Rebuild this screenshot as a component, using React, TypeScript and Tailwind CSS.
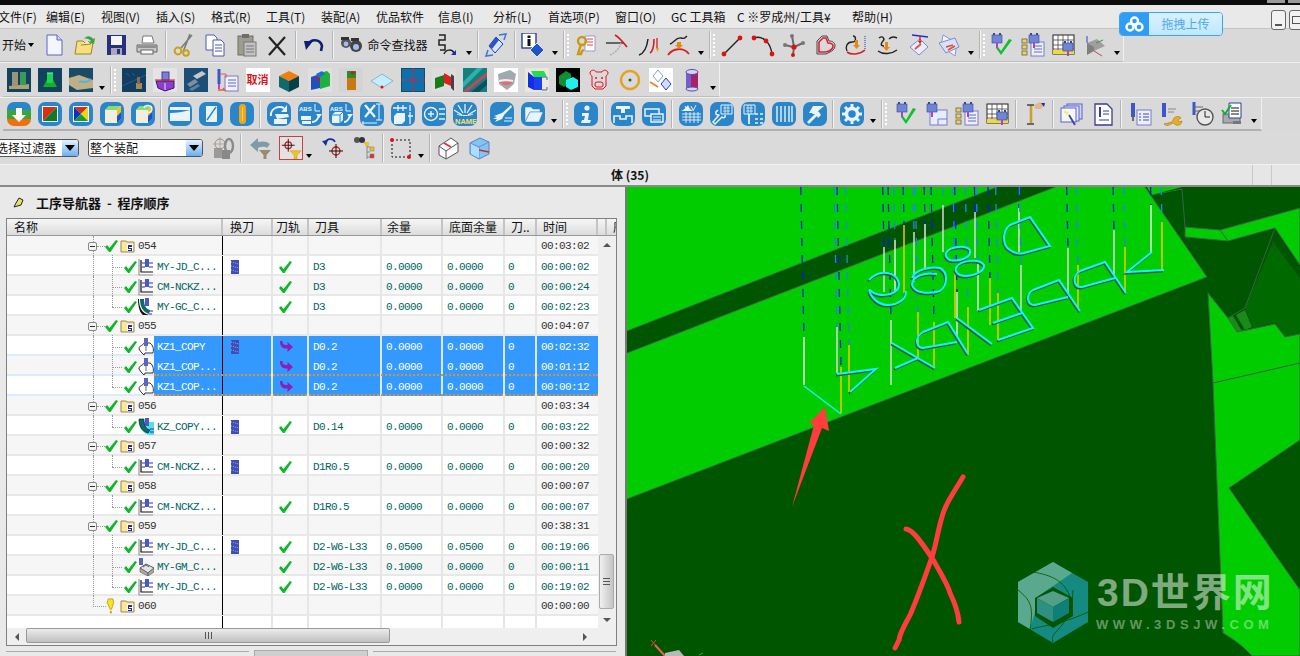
import type { ReactNode } from "react";

const S = ({ children }: { children: ReactNode }) => (
  <svg width="24" height="24" viewBox="0 0 24 24" fill="none">
    {children}
  </svg>
);

const Head = ({ x = 0, y = 0 }: { x?: number; y?: number }) => (
  <g transform={`translate(${x} ${y})`}>
    <rect x="0" y="2" width="10" height="8" fill="#6f86d8" stroke="#34478f" strokeWidth="0.6" />
    <rect x="1" y="0" width="2" height="2" fill="#34478f" />
    <rect x="7" y="0" width="2" height="2" fill="#34478f" />
    <rect x="4" y="10" width="2" height="5" fill="#b43fc4" />
  </g>
);

const Dot = ({ x, y, c = "#e01010", r = 2 }: { x: number; y: number; c?: string; r?: number }) => <circle cx={x} cy={y} r={r} fill={c} />;

// row 1
const row1a = [
  <S><path d="M5 2h10l5 5v15H5z" fill="#f4f6ff" stroke="#5a62c8" /><path d="M15 2v5h5" fill="#cfd4f5" stroke="#5a62c8" /></S>,
  <S><path d="M2 21 4 8h6l2 2h8l-2 11z" fill="#f6df7f" stroke="#9a8430" /><path d="M8 12 18 11l-3-3" fill="#f9eeb0" stroke="#9a8430" /><path d="M11 6c3-4 7-3 9 0l2-1-1 6-5-2 2-1c-2-2-4-3-7-2" fill="#3aa53a" /></S>,
  <S><rect x="3" y="2" width="19" height="20" fill="#26307e" /><rect x="7" y="3" width="11" height="9" fill="#f5f5f5" /><rect x="7" y="15" width="11" height="7" fill="#a8a8b8" /><rect x="13" y="16" width="3" height="5" fill="#26307e" /></S>,
  <S><path d="M8 3h9l2 7H7z" fill="#fff" stroke="#777" /><path d="M2 12h20v7H2z" fill="#c8c8c8" stroke="#666" /><rect x="6" y="17" width="12" height="4" fill="#fafafa" stroke="#666" /><rect x="3" y="13" width="18" height="2" fill="#909090" /></S>,
];
const row1b = [
  <S><path d="M20 2 9 15M18 1 11 19" stroke="#7b7b7b" strokeWidth="1.6" /><circle cx="6" cy="18" r="3.4" stroke="#c9a11c" strokeWidth="2" /><circle cx="14" cy="20" r="2.8" stroke="#c9a11c" strokeWidth="2" /></S>,
  <S><path d="M3 2h8l3 3v12H3z" fill="#fff" stroke="#4a56b8" /><path d="M10 7h8l3 3v13H10z" fill="#fff" stroke="#4a56b8" /><path d="M12 12h7M12 15h7M12 18h7" stroke="#4a56b8" /></S>,
  <S><rect x="4" y="3" width="15" height="19" fill="#9c9c8f" stroke="#70705f" /><rect x="8" y="1" width="7" height="4" fill="#6e6e66" /><rect x="10" y="9" width="12" height="14" fill="#c2c2c2" stroke="#777" /><path d="M12 13h8M12 16h8M12 19h8" stroke="#777" /></S>,
  <S><path d="M4 4 20 22M20 4 4 22" stroke="#222" strokeWidth="2.2" /></S>,
];
const undo = <S><path d="M6 12c2-6 12-7 14 1l-1 5" stroke="#0f1f70" strokeWidth="2.6" /><path d="M2 8l9 0-7 9z" fill="#0f1f70" /></S>;
const binoc = <S><circle cx="7" cy="10" r="5" fill="#555" /><circle cx="17" cy="13" r="6" fill="#444" /><circle cx="17" cy="14" r="3" fill="#a3b8ff" /><circle cx="7" cy="11" r="2.4" fill="#a3b8ff" /><rect x="2" y="4" width="8" height="3" fill="#333" /><rect x="12" y="5" width="8" height="3" fill="#333" /></S>;
const seq = <S><path d="M4 2h6v5H4v5h6v5H5" stroke="#222" strokeWidth="1.5" /><path d="M9 21c2-5 8-5 10-1" stroke="#222" strokeWidth="1.5" /><path d="M21 17v5h-5z" fill="#2030a0" /></S>;
const diam = <S><path d="M12 4 19 11 11 20 5 13z" fill="#dbe4ff" stroke="#1e3ea8" /><path d="M12 4 15 7 8 16 5 13z" fill="#2d55c8" /><path d="M15 2l7-1-2 6M9 22l-7 1 2-6" stroke="#3f74d8" strokeWidth="1.5" /></S>;
const infoD = <S><rect x="1" y="0" width="14" height="15" fill="#fff" stroke="#20308a" strokeWidth="1.3" /><rect x="6.5" y="2.5" width="3" height="2.5" fill="#111" /><rect x="6.5" y="6" width="3" height="7" fill="#111" /><path d="M16 10 23 17 16 24 9 17z" fill="#1f55c8" stroke="#d9e6ff" /></S>;
const row1c = [
  <S><path d="M11 3h10v15H11z" fill="#fff" stroke="#9a9ad0" /><path d="M13 6h6M13 9h6M13 12h6" stroke="#e04040" /><circle cx="8" cy="8" r="4" stroke="#c99a14" strokeWidth="2.4" /><path d="M7 11 4 21h3l1-3 2-1" stroke="#c99a14" strokeWidth="2.4" /></S>,
  <S><path d="M1 10h18" stroke="#333" strokeWidth="1.4" /><path d="M5 22c5-2 10-7 11-12" stroke="#aaa" strokeWidth="1.4" strokeDasharray="2 1" /><path d="M10 2c4 2 8 7 12 12" stroke="#d02020" strokeWidth="1.8" /></S>,
  <S><path d="M3 22c6-2 8-8 9-16" stroke="#222" strokeWidth="1.5" /><path d="M14 20c3-2 4-7 4-14" stroke="#d02020" strokeWidth="1.6" /><path d="M21 5v10" stroke="#d02020" strokeWidth="1.3" /><path d="M20 15l3 0-1.5 4z" fill="#e89a10" /></S>,
  <S><path d="M3 11c4-1 6-7 11-6 3 1 4 0 6-2" stroke="#222" strokeWidth="1.4" /><path d="M1 22c5-7 15-8 21-1" stroke="#d82020" strokeWidth="1.8" /><path d="M10 9h4v3h2l-4 4-4-4h2z" fill="#e58a10" /></S>,
];
const row1d = [
  <S><path d="M4 21 20 5" stroke="#222" strokeWidth="1.4" /><Dot x={4} y={21} r={2.4} /><Dot x={20} y={5} r={2.4} /></S>,
  <S><path d="M3 5c8-3 17 4 18 17" stroke="#222" strokeWidth="1.4" /><Dot x={3} y={5} r={2.4} /><Dot x={15} y={8} r={2.4} /><Dot x={21} y={21} r={2.4} /></S>,
  <S><path d="M3 12 11 14M21 10 12 14M12 14l-1 8M10 3l2 11" stroke="#6a6a6a" strokeWidth="2" /><Dot x={12} y={14} r={2.6} /><Dot x={3} y={12} c="#777" /><Dot x={21} y={10} c="#777" /><Dot x={10} y={3} c="#777" /><Dot x={11} y={22} /></S>,
  <S><path d="M4 21V8l5-5h5l2 5c4 0 6 2 6 5s-3 5-5 6l-4 2z" stroke="#444" strokeWidth="1" /><path d="M6 19V9l4-4h3l2 5c3 0 5 1 5 3s-2 4-4 5l-3 1z" stroke="#e02030" strokeWidth="1.6" /></S>,
  <S><path d="M3 18c-2-4 0-9 5-9s4-6 1-6" stroke="#222" strokeWidth="1.4" /><path d="M3 19c4 3 12 3 18-2" stroke="#d02020" strokeWidth="1.6" /><path d="M21 16V3" stroke="#2030c0" strokeDasharray="1 1" /><path d="M11 7h3v5h2l-3.5 4L9 12h2z" fill="#e58a10" /></S>,
  <S><path d="M4 5c4-3 6 1 4 3s-3 5 1 5" stroke="#222" strokeWidth="1.4" /><path d="M14 6c3-3 6-2 8-1M3 18c5 4 14 3 19-1" stroke="#222" strokeWidth="1.4" /><path d="M10 9h3v5h2l-3.5 4L8 14h2z" fill="#e58a10" /></S>,
  <S><path d="M4 14 14 6l8 8-9 8z" fill="#e9eeff" stroke="#7a8bd0" /><path d="M9 16l6-5" stroke="#e55030" strokeWidth="1.8" /><path d="M6 2l16 2" stroke="#2030c0" strokeWidth="1.4" /><path d="M14 3v6" stroke="#d02020" strokeWidth="1.4" /><path d="M12 8h4l-2 3z" fill="#d02020" /></S>,
  <S><path d="M6 2l14 8-2 13L4 13z" fill="#f2f4ff" stroke="#8a9ad0" /><path d="M2 10 18 5l4 9-13 6z" fill="#d9e0ff" stroke="#7a8bd0" /><path d="M9 14l7-2M11 17l7-4" stroke="#e05020" strokeWidth="1.6" /></S>,
];
const machTree = <S><rect x="10" y="9" width="13" height="14" fill="#eef0ff" stroke="#7a7ad0" /><path d="M13 13h8M13 16h8M13 19h8" stroke="#5c6ac8" /><rect x="1" y="6" width="5" height="4" fill="#f2d640" stroke="#777" /><rect x="1" y="12" width="5" height="4" fill="#f2d640" stroke="#777" /><rect x="1" y="18" width="5" height="4" fill="#f2d640" stroke="#777" /><Head x={8} y={0} /></S>;
const machGrid = <S><rect x="1" y="2" width="21" height="19" fill="#fff" stroke="#222" /><path d="M1 7h21M1 12h21M1 16h21M6 2v19M11 2v19M16 2v19" stroke="#444" strokeWidth="0.8" /><rect x="1" y="17" width="21" height="4" fill="#f1d93a" /><Head x={11} y={8} /></S>;
const row1e = [
  <S><Head x={2} y={0} /><path d="M6 15l5 7 11-15-3-1-8 12-3-4z" fill="#10c030" /></S>,
  machTree,
  machGrid,
  <S><path d="M4 10 14 6 22 13 11 18 4 15z" fill="#9f9f9f" /><path d="M4 10v12l7-4V14z" fill="#7f7f7f" /><path d="M4 10V3" stroke="#556ac8" strokeWidth="1.3" /><path d="M13 10l7-3" stroke="#4a8a4a" /><path d="M11 18l8 5" stroke="#b05050" /></S>,
];

// row 2, pictures on small squares
const Pic = ({ bg, children }: { bg: string; children: ReactNode }) => (
  <svg width="24" height="24" viewBox="0 0 24 24" fill="none">
    <rect width="24" height="24" fill={bg} />
    {children}
  </svg>
);
const row2a = [
  <Pic bg="#12425e"><path d="M2 18 22 16v5H2z" fill="#b0a070" /><rect x="5" y="4" width="6" height="14" fill="#9c9478" /><rect x="13" y="4" width="6" height="13" fill="#3a9a5a" /></Pic>,
  <Pic bg="#12425e"><path d="M5 19 12 6l7 13z" fill="#10b020" /><rect x="9" y="5" width="6" height="10" fill="#20d050" /><path d="M9 5h6" stroke="#60ffd0" /></Pic>,
  <Pic bg="#1a4a66"><path d="M0 10 10 7 24 12v8L8 22 0 17z" fill="#bfae86" /><path d="M10 14c4-2 6 3 12-3" stroke="#4fb8d8" strokeWidth="2" /></Pic>,
];
const row2b = [
  <Pic bg="#123e62"><path d="M0 18 24 7" stroke="#2a5c88" /><rect x="14" y="15" width="6" height="6" fill="#a88a58" /><rect x="15" y="9" width="3" height="7" fill="#8a6a48" /><path d="M4 5l4 3M10 5l3 3" stroke="#2a5c88" /></Pic>,
  <Pic bg="#e4e4e4"><rect x="9" y="4" width="7" height="8" fill="#7d7dd8" stroke="#40409a" /><path d="M3 13h18v7l-9 3-7-3z" fill="#8a3fc8" stroke="#40107a" /><path d="M12 15v7" stroke="#e8d8ff" /><path d="M2 12h20" stroke="#d02020" /></Pic>,
  <Pic bg="#1c4f78"><path d="M9 8 18 3l4 3-9 5z" fill="#c8c8c8" /><path d="M3 16 11 11l3 3-8 5z" fill="#7f8f9f" /><path d="M5 21l9-5 2 2-8 5z" fill="#5f7f9f" /></Pic>,
  <S><path d="M4 1v15" stroke="#3d56c8" strokeWidth="3" /><path d="M4 16v5" stroke="#c040c0" strokeWidth="2" /><rect x="10" y="8" width="13" height="15" fill="#f0f2ff" stroke="#7a7ad0" /><path d="M13 12h8M13 15h8M13 18h8" stroke="#5c6ac8" /><path d="M5 6h6v4" stroke="#e06030" /><path d="M3 22h7l-2-2" stroke="#e06030" strokeWidth="1.3" /></S>,
];
const Cancel = () => (
  <div className="w-[24px] h-[24px] bg-white flex items-center justify-center text-[#e01020] text-[11px] font-bold leading-none whitespace-nowrap font-['Noto_Sans_CJK_SC',sans-serif]">
    取消
  </div>
);
const row2c = [
  <S><path d="M2 8 12 3l10 5-10 5z" fill="#f07f10" /><path d="M2 8v11l10 5V13z" fill="#0f6a6a" /><path d="M22 8v11l-10 5V13z" fill="#0a3f48" /></S>,
  <Pic bg="#dfdfdf"><path d="M3 9l9-3v14l-9 2z" fill="#2050c0" /><path d="M12 5l7-2 3 3v12l-10 3z" fill="#20b040" /><path d="M8 6l6-3 3 3-6 4z" fill="#1a70d0" /><Dot x={10} y={11} r={1.8} /></Pic>,
  <Pic bg="#d4d4d4"><rect x="8" y="9" width="9" height="13" fill="#c87a10" /><rect x="8" y="3" width="9" height="7" fill="#2e8a2e" /><path d="M11 4l3-1 3 2-4 2z" fill="#a03030" /></Pic>,
  <S><path d="M12 6 23 13 12 20 1 13z" fill="#bfefff" stroke="#9ab0c0" /><Dot x={12} y={19} r={1.5} /></S>,
  <Pic bg="#0f6fa8"><rect x="0.5" y="0.5" width="23" height="23" stroke="#134a6a" /><path d="M0 12h24M12 0v24" stroke="#b83050" /><Dot x={12} y={12} c="#b83050" r={1.8} /></Pic>,
  <Pic bg="#dddddd"><path d="M3 10l9-3v11l-9 3z" fill="#1c7a1c" /><path d="M12 5l7 4v9l-7-3z" fill="#e02020" /><path d="M19 6l3 2v15l-3-3z" fill="#444" /></Pic>,
  <Pic bg="#128080"><path d="M0 20 20 0h-6L0 14z" fill="#30b0a8" /><path d="M0 23 24 4v4L4 24z" fill="#c04858" /><path d="M8 24 24 11v6l-8 7z" fill="#0a5060" /></Pic>,
  <Pic bg="#ffffff"><path d="M4 6 16 2l6 4-2 10-7 6-8-6z" fill="#a0a8b0" /><path d="M5 13c4-3 10-3 14 0-2 5-10 6-14 0z" fill="#e07070" /><path d="M5 13c4-1 10-1 14 0" stroke="#f0f0f0" strokeWidth="2" /></Pic>,
  <Pic bg="#ece8d8"><path d="M6 3h13l3 6H9z" fill="#20e050" /><path d="M3 4l6 5v13l-6-3z" fill="#1030e0" /><path d="M9 9h8v13H9z" fill="#2040f0" /><path d="M17 9h5M17 22h5M22 9v3M22 19v3" stroke="#7a8ac8" strokeWidth="1.5" /></Pic>,
  <Pic bg="#000000"><path d="M3 8l7-5 5 3v9l-7 4-5-3z" fill="#109030" /><path d="M10 12l7-3 5 3v7l-7 3-5-3z" fill="#20f0f0" /></Pic>,
  <S><path d="M3 5c0-3 5-4 6-1h6c1-3 6-2 6 1 0 2-2 3-2 3v10l-3 3H8l-3-3V8S3 7 3 5z" stroke="#e81020" strokeWidth="1" /><circle cx="9" cy="10" r="1" fill="#e81020" /><circle cx="15" cy="10" r="1" fill="#e81020" /><rect x="8" y="14" width="8" height="5" rx="2" stroke="#e81020" /></S>,
  <S><circle cx="12" cy="12" r="9" stroke="#e3a324" strokeWidth="2.6" /><circle cx="12" cy="12" r="1.5" fill="#1a6a20" /></S>,
  <Pic bg="#ffffff"><path d="M4 8l5-6 5 6-5 6z" stroke="#7f9ad8" /><path d="M12 16l5-6 5 6-5 6z" fill="#d0dcff" stroke="#2040c0" /><path d="M1 14l8 5" stroke="#f08020" strokeWidth="1.8" /></Pic>,
];
const cyl = <S><rect x="6" y="4" width="12" height="17" fill="#a82068" /><rect x="6" y="4" width="5" height="17" fill="#7060c8" /><ellipse cx="12" cy="4" rx="6" ry="2.5" fill="#d6d6f4" stroke="#5050b0" /><ellipse cx="12" cy="21" rx="6" ry="2" fill="#d6d6f4" stroke="#5050b0" /></S>;

// row 3, blue tiles
const T = ({ children }: { children: ReactNode }) => (
  <div className="w-[24px] h-[24px] rounded-[7px] bg-[#2a85c9] overflow-hidden">
    <svg width="24" height="24" viewBox="0 0 24 24" fill="none">
      {children}
    </svg>
  </div>
);
const W = "#e9f3fb";
const row3a = [
  <div className="w-[24px] h-[24px] rounded-[7px] overflow-hidden">
    <svg width="24" height="24" viewBox="0 0 24 24" fill="none"><rect width="24" height="8" fill="#2a85c9" /><rect y="8" width="24" height="9" fill="#3aa53a" /><rect y="17" width="24" height="7" fill="#f07010" /><path d="M9 6h6v7h4l-7 7-7-7h4z" fill="#fff" /></svg>
  </div>,
  <T><rect x="4" y="4" width="16" height="16" fill={W} /><path d="M5 5h14L5 19z" fill="#d83010" /><path d="M19 5v14H5z" fill="#0f7a2a" /></T>,
  <T><rect x="4" y="4" width="16" height="16" fill={W} /><path d="M5 5h14l-7 7z" fill="#d83010" /><path d="M5 5v14l7-7z" fill="#1030c0" /><path d="M19 5v14l-7-7z" fill="#f2d410" /><path d="M5 19h14l-7-7z" fill="#10a030" /></T>,
  <T><path d="M5 8l4-4h12v13l-4 4H5z" fill="#f0eedd" /><path d="M5 8l4-4h12l-4 4z" fill="#8ada70" /><path d="M17 8l4-4v6l-4 4z" fill="#f2c020" /><path d="M17 14l4-4v7l-4 4z" fill="#2050c8" /></T>,
  <T><path d="M5 8l4-4h12v13l-4 4H5z" fill="#f0eedd" /><path d="M5 8l4-4h12l-4 4z" fill="#8ada70" /><path d="M17 8l4-4v6l-4 4z" fill="#f2c020" /><path d="M17 14l4-4v7l-4 4z" fill="#2050c8" /><path d="M13 6c1-4 8-3 8 1 0 3-3 4-5 3" stroke={W} strokeWidth="1.4" /></T>,
];
const row3b = [
  <T><path d="M2 5h20v3H2z" fill={W} /><path d="M2 11c7 0 13-1 20-3v11H2z" fill={W} /></T>,
  <T><path d="M7 4h11v16H7z" fill={W} /><path d="M8 18 17 5" stroke="#2a85c9" strokeWidth="1.4" /></T>,
  <T><rect x="9" y="2" width="7" height="20" rx="3.5" fill="#f2a614" /><path d="M12.5 5v14" stroke="#ffd870" /></T>,
];
const Abs = () => (
  <>
    <text x="1" y="9" fontSize="6" fontWeight="bold" fill={W} fontFamily="Liberation Sans, sans-serif">ABS</text>
    <path d="M17 9V2M17 9h5" stroke={W} />
  </>
);
const row3c = [
  <T><path d="M4 14c-1-7 7-11 13-8" stroke={W} strokeWidth="2" /><path d="M8 12h13l1 3-12 2z" fill={W} /><path d="M7 17h13v5H7z" fill={W} /><path d="M20 3v7h-6z" fill={W} /></T>,
  <T><Abs /><path d="M3 14h10v4H3zM4 19h9v3H4z" fill={W} /><path d="M14 20c4 0 6-3 7-7" stroke={W} strokeWidth="1.8" /><path d="M18 12h6l-3 4z" fill={W} /></T>,
  <T><Abs /><path d="M3 13l3-3h8v8l-3 3H3z" fill={W} /><path d="M3 13h8v8M11 13l3-3" stroke="#2a85c9" /><path d="M15 20c3 0 5-3 6-7" stroke={W} strokeWidth="1.8" /><path d="M18 12h6l-3 4z" fill={W} /></T>,
  <T><path d="M5 3l10 12M15 3 5 15" stroke={W} strokeWidth="2.4" /><path d="M19 2v16M16 2h6M16 18h6M2 21h15M3 19v4" stroke={W} /></T>,
  <T><path d="M3 14l3-3h8v8l-3 3H3z" fill={W} /><path d="M2 6h14M7 3v6M12 3v6M19 3v6M17 14h5M19 10v12" stroke={W} strokeWidth="1.3" /></T>,
  <T><circle cx="9" cy="12" r="6.5" stroke={W} strokeWidth="1.4" /><path d="M6 12h6M9 9v6" stroke={W} strokeWidth="1.4" /><path d="M17 7h6M17 12h6M17 17h6" stroke={W} strokeWidth="1.4" /></T>,
  <T><path d="M12 2v9M5 3l5 8M19 3l-5 8M1 8l8 5M23 8l-8 5" stroke={W} strokeWidth="1.3" /><path d="M4 12c3 2 13 2 16 0" stroke={W} /><text x="2" y="22" fontSize="7.5" fontWeight="bold" fill="#f8e060" fontFamily="Liberation Sans, sans-serif">NAME</text></T>,
];
const row3d = [
  <T><path d="M21 3 11 12l2 2 9-9z" fill={W} /><path d="M12 11l-8 3 3 1-4 2 4 0-2 3 7-3 2-4z" fill={W} /><path d="M15 16h7M14 19h8" stroke={W} /></T>,
  <T><path d="M4 20V5h6l2 2h7v3H9z" fill={W} stroke="#2a85c9" strokeWidth="0.5" /><path d="M4 20 9 10h13l-4 10z" fill={W} stroke="#2a85c9" strokeWidth="0.5" /></T>,
];
const infoTile = <T><circle cx="13" cy="6" r="2.6" fill={W} /><path d="M8 11h7l-1 7h3l-1 3H7l1-3h2l1-4H8z" fill={W} /></T>;
const row3e = [
  <T><path d="M5 4h14v3h-5v4h-4V7H5z" fill={W} /><path d="M3 21v-7h6v3h6v-3h6v7" stroke={W} strokeWidth="1.6" /></T>,
  <T><path d="M3 7h14v7H3z" stroke={W} strokeWidth="1.5" /><path d="M9 12h12v8H9z" fill="#2a85c9" stroke={W} strokeWidth="1.5" /><path d="M11 15h8M11 18h8" stroke={W} /></T>,
];
const row3f = [
  <T><path d="M2 9c3-1 5-4 7-6 1 3 3 5 5 6H2z" fill={W} /><path d="M12 4l2 4M17 3l-3 6M6 4l2 4" stroke={W} /><path d="M3 12h19M3 15h19M3 18h19M7 10v11M11 10v11M15 10v11M19 10v11" stroke={W} strokeWidth="0.9" /></T>,
  <T><path d="M11 3h11v9H11z" stroke={W} /><path d="M13 6h7M13 9h7M15 3v9M18 3v9" stroke={W} strokeWidth="0.8" /><path d="M8 8 6 10c-1 4 2 2 3 3L3 20l2 2 7-7c1 1 4 1 3-2" stroke={W} strokeWidth="1.5" /></T>,
  <T><path d="M3 3h11v9H3z" stroke={W} /><path d="M5 6h7M5 9h7M7 3v9M10 3v9" stroke={W} strokeWidth="0.8" /><path d="M8 12v10" stroke={W} strokeWidth="1.8" /><path d="M14 12h3M19 12h3M14 17h3M19 17h3M14 21h3M19 21h3" stroke={W} strokeWidth="1.6" /></T>,
  <T><path d="M5 4v16M9 4v16M13 4v16M17 4v16M20 4v16" stroke={W} strokeWidth="1.4" /></T>,
  <T><path d="M10 4h11l-8 7H6z" fill={W} /><path d="M12 8 9 12l3 0-8 8 2 2 8-8 1 2 3-3-2-3" fill={W} /></T>,
];
const gear = <T><circle cx="12" cy="12" r="5.5" stroke={W} strokeWidth="3.5" /><path d="M12 2v4M12 18v4M2 12h4M18 12h4M5 5l3 3M16 16l3 3M19 5l-3 3M8 16l-3 3" stroke={W} strokeWidth="3" /></T>;
const mach3 = [
  <S><Head x={4} y={0} /><path d="M8 15l5 7 10-15-3-1-7 12-3-4z" fill="#10c030" /></S>,
  <S><rect x="6" y="8" width="17" height="15" fill="#e8ecff" stroke="#7a7ad0" /><path d="M14 17h9M14 17v6" stroke="#7a7ad0" /><Head x={3} y={0} /></S>,
  machTree,
  machGrid,
];
const flag = <S><path d="M8 3v18" stroke="#c8a030" strokeWidth="2.6" /><path d="M4 3h7M4 22h7" stroke="#444" strokeWidth="1.6" /><path d="M11 3l6-3 4 3-3 4-6 0z" fill="#e0b890" /><path d="M18 1l4 0-1 4z" fill="#2030a0" /></S>;
const wiz = <S><rect x="7" y="2" width="15" height="15" fill="#d0d4f8" stroke="#5a62c8" /><rect x="4" y="4" width="15" height="15" fill="#e4e8ff" stroke="#5a62c8" /><rect x="1" y="6" width="15" height="14" fill="#f4f6ff" stroke="#5a62c8" /><path d="M5 8l2 2 2-1-1 2 2 2-3-1-1 2v-3H4z" fill="#f4f440" /><path d="M9 13l6 10" stroke="#4040b0" strokeWidth="1.8" /></S>;
const docT = <S><path d="M4 2h12l5 5v16H4z" fill="#fff" stroke="#3a3a9a" strokeWidth="1.3" /><path d="M9 5v10" stroke="#3040b0" strokeWidth="2" /><path d="M12 9h6M12 12h6M8 18h10" stroke="#3a3a9a" /></S>;
const last4 = [
  <S><path d="M5 1v14" stroke="#3d56c8" strokeWidth="4" /><path d="M5 15v4" stroke="#444" strokeWidth="1.5" /><rect x="9" y="8" width="14" height="15" fill="#eef0ff" stroke="#7a7ad0" /><path d="M15 12h6M15 15h6M15 18h6M11 12h2M11 15h2M11 18h2" stroke="#3a4ab0" /></S>,
  <S><path d="M5 1v14" stroke="#3d56c8" strokeWidth="4" /><path d="M9 7h8M9 10h6" stroke="#888" /><path d="M5 22l8-2 2-4c2-2 6-2 7 0l-3 2 1 2 3-1c0 3-3 5-6 4l-3-2-6 3z" fill="#e8b020" stroke="#8a6a10" strokeWidth="0.5" /></S>,
  <S><path d="M4 0v13" stroke="#3d56c8" strokeWidth="3" /><path d="M4 5h9M4 9h7" stroke="#666" /><circle cx="15" cy="15" r="8" fill="#e8e8e8" stroke="#555" strokeWidth="1.4" /><path d="M15 9v6h5" stroke="#222" /></S>,
  <S><rect x="2" y="12" width="17" height="9" fill="#aaa" stroke="#666" /><path d="M8 1h12v15H8z" fill="#fff" stroke="#2040a0" /><path d="M10 6h8M10 9h8M10 12h8" stroke="#111" /><path d="M1 8l3 4 6-9" stroke="#10b030" strokeWidth="2" /><rect x="12" y="19" width="8" height="3" fill="#777" /></S>,
];

// row 4
const filter = <path d="M11 15h12l-4.5 5v4h-3v-4z" fill="#f2c21f" stroke="#c29010" strokeWidth="0.5" />;
const Cross = ({ x, y, r = 3.6 }: { x: number; y: number; r?: number }) => (
  <g>
    <circle cx={x} cy={y} r={r} stroke="#d81010" strokeWidth="1.3" />
    <path d={`M${x - 7} ${y}h14M${x} ${y - 7}v14`} stroke="#111" />
  </g>
);
const grayLink = <S><rect x="3" y="12" width="8" height="10" fill="#9a9a9a" /><rect x="11" y="14" width="8" height="9" fill="#888" /><circle cx="9" cy="8" r="5" stroke="#a88" strokeWidth="1" /><ellipse cx="18" cy="10" rx="4" ry="7" stroke="#8a8a8a" strokeWidth="2.4" /><path d="M2 8h14M9 1v14" stroke="#998" strokeWidth="0.7" /></S>;
const grayBack = <S><path d="M22 8c-3-3-8-3-12-2V2L2 9l8 7v-4c5-2 8-1 9 0z" fill="#7f9aa8" /><path d="M11 14h12l-4.5 5v4h-3v-4z" fill="#9a8a70" /></S>;
const redBox = <div className="w-[24px] h-[24px] border border-[#c84040] bg-[#e2e2e2]"><svg width="22" height="22" viewBox="0 0 24 24" fill="none"><Cross x={9} y={9} />{filter}</svg></div>;
const undoCross = <S><Cross x={14} y={15} r={4} /><path d="M3 7c2-5 8-5 10-1" stroke="#1030a0" strokeWidth="1.6" /><path d="M0 5l6-1-2 6z" fill="#1030a0" /></S>;
const findTree = <S><circle cx="4" cy="4" r="3" fill="#555" /><circle cx="9" cy="4" r="3" fill="#333" /><path d="M11 7h3v16M14 11h3M14 16h3M14 21h3" stroke="#777" strokeWidth="0.8" /><rect x="12" y="6" width="4" height="4" fill="#eec020" /><rect x="17" y="11" width="4" height="4" fill="#eec020" stroke="#777" strokeWidth="0.5" /><rect x="17" y="18" width="4" height="4" fill="#e03030" stroke="#777" strokeWidth="0.5" /></S>;
const dashRect = <S><rect x="4" y="4" width="18" height="17" stroke="#111" strokeDasharray="2 2" /><Dot x={4} y={4} r={2} /><Dot x={21} y={21} r={2} /></S>;
const tape = <S><path d="M3 10 15 2l7 5v9L10 23l-7-4z" fill="#fbfbfb" stroke="#556" /><path d="M3 10l7 5v8" stroke="#556" /><path d="M10 15 22 7" stroke="#556" /><path d="M8 7l7 4" stroke="#e03030" strokeWidth="1.8" /></S>;
const box3d = <S><path d="M3 7 13 2l9 4v12l-10 5-9-5z" fill="#7cc8f0" stroke="#5a80c8" /><path d="M3 7l9 4 10-5M12 11v12" stroke="#8a7ae0" /><path d="M12 14l10 2" stroke="#e02030" strokeWidth="1.3" /><path d="M4 8l8 4v10l-8-4z" fill="#a8e0ff" /></S>;

const Cell = ({ children }: { children: ReactNode }) => <div className="w-[31px] flex justify-center items-center shrink-0">{children}</div>;
const Sep = () => (
  <div className="w-[6px] flex justify-center items-center shrink-0 h-full">
    <div className="h-[28px] w-[2px] border-l border-[#b4b4b4] border-r border-r-[#f4f4f4]" />
  </div>
);
const Grip = () => (
  <div className="w-[10px] flex shrink-0 h-full items-center">
    <div className="w-[6px] flex justify-center">
      <div className="h-[28px] w-[2px] border-l border-[#b4b4b4] border-r border-r-[#f4f4f4]" />
    </div>
    <div className="h-[22px] w-[3px] border-l-2 border-dotted border-white" />
  </div>
);
const Drop = () => (
  <div className="w-[12px] shrink-0 h-full flex items-end justify-center pb-[6px]">
    <div className="w-0 h-0 border-x-[3px] border-x-transparent border-t-[4px] border-t-black" />
  </div>
);
const Icons = ({ list }: { list: ReactNode[] }) => (
  <>
    {list.map((n, i) => (
      <Cell key={i}>{n}</Cell>
    ))}
  </>
);
const Bar = ({ className, children }: { className: string; children: ReactNode }) => (
  <div className={`flex items-center h-full border-r border-r-[#f0f0f0] ${className}`}>{children}</div>
);

const menus = [
  ["文件(F)", "w-[34px]"],
  ["编辑(E)", "w-[41px]"],
  ["视图(V)", "w-[41px]"],
  ["插入(S)", "w-[41px]"],
  ["格式(R)", "w-[41px]"],
  ["工具(T)", "w-[41px]"],
  ["装配(A)", "w-[41px]"],
  ["优品软件", "w-[48px]"],
  ["信息(I)", "w-[41px]"],
  ["分析(L)", "w-[41px]"],
  ["首选项(P)", "w-[53px]"],
  ["窗口(O)", "w-[41px]"],
  ["GC 工具箱", "w-[52px]"],
  ["C ※罗成州/工具¥", "w-[101px]"],
  ["帮助(H)", "w-[41px]"],
];

const check = (
  <svg width="13" height="13" viewBox="0 0 13 13" className="shrink-0">
    <path d="M0 7l2-2 2.5 3L11 0l2 1-7.5 11H4z" fill="#12b52e" />
  </svg>
);
const folder = (
  <svg width="15" height="14" viewBox="0 0 15 14" className="shrink-0">
    <path d="M1 2h5l1 1h7v10H1z" fill="#fbe79a" stroke="#9a8a4a" />
    <path d="M7 5h6v7H7z" fill="#fffbe0" />
    <path d="M8 6h4v2H9v1h3v3H8v-1h3v-1H8z" fill="#1a28c8" />
  </svg>
);
const bulb = (
  <svg width="9" height="16" viewBox="0 0 13 17" preserveAspectRatio="none" className="shrink-0">
    <path d="M3 1h7l1 4-3 7H6L2 5z" fill="#f7e224" stroke="#b89a10" />
    <circle cx="7" cy="15" r="1.6" fill="#c9a818" />
  </svg>
);
const Mini = ({ children }: { children: ReactNode }) => (
  <svg width="16" height="18" viewBox="0 0 16 18" fill="none" className="shrink-0">
    {children}
  </svg>
);
const opL = (
  <Mini>
    <path d="M1 1v16h14" stroke="#999" strokeWidth="1.2" />
    <path d="M3 2v12h12" stroke="#111" strokeWidth="1.2" />
    <rect x="7" y="1" width="4" height="8" fill="#4a58c8" />
    <path d="M4 5h3M4 9h3M11 5h4M11 9h4" stroke="#2030c0" />
  </Mini>
);
const opGc = (
  <Mini>
    <path d="M1 1c0 9 3 14 10 16H5C2 15 0 9 0 1z" fill="#111" />
    <path d="M2 1c0 8 3 13 9 15l1-4C8 11 6 8 6 1z" fill="#0f6a6a" />
    <rect x="7" y="0" width="4" height="8" fill="#4a58c8" />
    <path d="M11 13h4M11 16h3" stroke="#2030c0" />
  </Mini>
);
const opKz = (
  <Mini>
    <path d="M1 11c0-4 4-3 5-6h6c3 2 4 6 3 10H7l-1 2-3-3z" fill="#fff" stroke="#333" />
    <rect x="6" y="0" width="4" height="8" fill="#5a66b8" />
    <path d="M8 8v5" stroke="#666" />
  </Mini>
);
const opKz2 = (
  <Mini>
    <path d="M1 1c0 9 3 14 10 16h5V4H7z" fill="#50e0f0" />
    <path d="M1 1c0 8 3 12 9 14l2-3C8 11 6 8 6 1z" fill="#0f6a6a" stroke="#111" strokeWidth="0.6" />
    <rect x="7" y="0" width="4" height="8" fill="#4a58c8" />
    <path d="M12 11h4M12 14h4" stroke="#2030c0" />
  </Mini>
);
const opGm = (
  <Mini>
    <path d="M2 10l6-4 8 4-6 5z" fill="#e4e4e4" stroke="#555" />
    <path d="M2 10v4l8 4v-3zM16 10v4l-6 4v-3z" fill="#aaa" stroke="#555" strokeWidth="0.6" />
    <rect x="1" y="0" width="4" height="7" fill="#5a66b8" />
    <path d="M5 9l3-2 3 2" stroke="#666" />
  </Mini>
);
const toolIcon = (
  <svg width="8" height="14" viewBox="0 0 8 14" className="block">
    <rect width="8" height="14" fill="#3d4eb8" />
    <path d="M0 2l8 2M0 6l8 2M0 10l8 2" stroke="#98a4e8" strokeDasharray="1 1" />
  </svg>
);
const pathArrow = (
  <svg width="14" height="12" viewBox="0 0 14 12" className="block">
    <path d="M1 0h2.5c0 3 1 4 5 4V1L14 6l-5.5 5V7.5C3 8 1 5 1 0z" fill="#8a20b8" />
  </svg>
);

type Row = {
  group?: boolean;
  name: string;
  icon?: ReactNode;
  tool?: boolean;
  sel?: boolean;
  last?: boolean;
  warn?: boolean;
  d?: string;
  a?: string;
  b?: string;
  t: string;
};

const rows: Row[] = [
  { group: true, name: "054", t: "00:03:02" },
  { name: "MY-JD_C...", icon: opL, tool: true, d: "D3", t: "00:00:02" },
  { name: "CM-NCKZ...", icon: opL, d: "D3", t: "00:00:24" },
  { name: "MY-GC_C...", icon: opGc, d: "D3", t: "00:02:23", last: true },
  { group: true, name: "055", t: "00:04:07" },
  { name: "KZ1_COPY", icon: opKz, tool: true, sel: true, d: "D0.2", t: "00:02:32" },
  { name: "KZ1_COP...", icon: opKz, sel: true, d: "D0.2", t: "00:01:12" },
  { name: "KZ1_COP...", icon: opKz, sel: true, d: "D0.2", t: "00:00:12", last: true },
  { group: true, name: "056", t: "00:03:34" },
  { name: "KZ_COPY...", icon: opKz2, tool: true, d: "D0.14", t: "00:03:22", last: true },
  { group: true, name: "057", t: "00:00:32" },
  { name: "CM-NCKZ...", icon: opL, tool: true, d: "D1R0.5", t: "00:00:20", last: true },
  { group: true, name: "058", t: "00:00:07" },
  { name: "CM-NCKZ...", icon: opL, d: "D1R0.5", t: "00:00:07", last: true },
  { group: true, name: "059", t: "00:38:31" },
  { name: "MY-JD_C...", icon: opL, tool: true, d: "D2-W6-L33", a: "0.0500", b: "0.0500", t: "00:19:06" },
  { name: "MY-GM_C...", icon: opGm, d: "D2-W6-L33", a: "0.1000", t: "00:00:11" },
  { name: "MY-JD_C...", icon: opL, d: "D2-W6-L33", t: "00:19:02", last: true },
  { group: true, warn: true, name: "060", t: "00:00:00" },
];

const GRID = "grid grid-cols-[216px_50px_36px_73px_61px_62px_32px_61px]";

const Values = ({ r }: { r: Row }) => {
  const color = r.sel ? "text-white" : r.group ? "text-[#333333]" : "text-[#00665e]";
  const bg = r.sel ? "bg-[#3399ff] border-r-[#dbeaff]" : "border-r-[#e6e6e6]";
  const cell = `border-r-2 flex items-center h-full min-w-0 pt-[2px] ${bg}`;
  return (
    <>
      <div className={`${cell} pl-[8px]`}>{r.tool && toolIcon}</div>
      <div className={`${cell} pl-[6px]`}>{!r.group && (r.sel ? pathArrow : check)}</div>
      <div className={`${cell} pl-[4px] ${color}`}>{r.d}</div>
      <div className={`${cell} pl-[4px] ${color}`}>{r.group ? "" : r.a ?? "0.0000"}</div>
      <div className={`${cell} pl-[4px] ${color}`}>{r.group ? "" : r.b ?? "0.0000"}</div>
      <div className={`${cell} pl-[3px] ${color}`}>{r.group ? "" : "0"}</div>
      <div className={`flex items-center h-full pt-[2px] pl-[4px] ${r.sel ? "bg-[#3399ff]" : ""} ${color}`}>{r.t}</div>
    </>
  );
};

const TreeRow = ({ r, i }: { r: Row; i: number }) => {
  const stripe = i % 2 === 0 ? "bg-[#f6f6f6]" : "bg-white";
  const lastGuide = i === rows.length - 1;
  return (
    <div className={`${GRID} relative h-[20px] border-b-2 ${r.sel ? "border-b-[#dbeaff]" : "border-b-[#e8e8e8]"} ${stripe}`}>
      <div className="relative border-r border-r-black flex items-center h-full pt-[2px]">
        <div className={`absolute left-[86px] top-0 border-l border-dotted border-[#999] ${lastGuide ? "h-[11px]" : "h-[20px]"}`} />
        {r.group ? (
          <div className="flex items-center h-full pl-[81px] w-full">
            {r.warn ? (
              <>
                <div className="w-[13px] h-px border-t border-dotted border-[#999] ml-[5px] shrink-0" />
                {bulb}
                <div className="w-[5px] shrink-0" />
              </>
            ) : (
              <>
                <div className="relative w-[9px] h-[9px] rounded-[2px] border border-[#888] bg-[#f4f4f4] shrink-0 flex items-center justify-center">
                  <div className="w-[5px] h-px bg-[#333]" />
                </div>
                <div className="w-[8px] h-px border-t border-dotted border-[#999] shrink-0" />
                {check}
                <div className="w-[2px] shrink-0" />
              </>
            )}
            {folder}
            <span className="pl-[3px] text-[#333]">{r.name}</span>
          </div>
        ) : (
          <div className="flex items-center h-full pl-[117px] w-full">
            <div className={`absolute left-[105px] top-[-1px] border-l border-dotted border-[#999] ${r.last ? "h-[12px]" : "h-[21px]"}`} />
            <div className="absolute left-[105px] top-[11px] w-[10px] border-t border-dotted border-[#999]" />
            {check}
            <div className="pl-[1px] shrink-0">{r.icon}</div>
            <div className={`-mt-[2px] pt-[2px] flex-1 h-[calc(100%+2px)] flex items-center pl-[3px] whitespace-nowrap overflow-hidden ${r.sel ? "bg-[#3399ff] text-white" : "text-[#00665e]"}`}>{r.name}</div>
          </div>
        )}
      </div>
      <Values r={r} />
      {(i === 6 || i === 7) && <div className="absolute left-[147px] right-0 bottom-[-2px] border-t-2 border-dotted border-[#e09030]" />}
    </div>
  );
};

const heads = [
  ["名称", "pl-[7px]"],
  ["换刀", "pl-[7px]"],
  ["刀轨", "pl-[3px]"],
  ["刀具", "pl-[6px]"],
  ["余量", "pl-[5px]"],
  ["底面余量", "pl-[6px]"],
  ["刀..", "pl-[6px]"],
  ["时间", "pl-[6px]"],
];

// toolpath verticals: x, top, bottom, colour
const paths: [number, number, number, string][] = [
  [804, 337, 385, "#e8e8e8"],
  [837, 327, 373, "#d8d8d8"],
  [841, 367, 413, "#f0c800"],
  [849, 345, 392, "#f0c800"],
  [884, 247, 292, "#d8d8d8"],
  [895, 240, 292, "#e8e8e8"],
  [904, 225, 293, "#f0c800"],
  [914, 232, 282, "#d8d8d8"],
  [925, 224, 270, "#e8e8e8"],
  [943, 205, 252, "#d8d8d8"],
  [891, 320, 385, "#d8d8d8"],
  [918, 312, 358, "#f0c800"],
  [934, 322, 368, "#f0c800"],
  [955, 272, 318, "#f0c800"],
  [957, 292, 338, "#e0e0e0"],
  [968, 307, 355, "#f0c800"],
  [975, 212, 258, "#d8d8d8"],
  [978, 263, 311, "#e0e0e0"],
  [990, 278, 325, "#f0c800"],
  [998, 293, 342, "#f0c800"],
  [1019, 208, 252, "#e0e0e0"],
  [1021, 265, 311, "#d8d8d8"],
  [1068, 248, 295, "#d8d8d8"],
  [1078, 265, 311, "#f0c800"],
  [1114, 230, 277, "#d8d8d8"],
  [1125, 247, 293, "#f0c800"],
  [1151, 205, 252, "#e8e8e8"],
  [1162, 222, 270, "#f0c800"],
];

const letters = [
  "M837 374 876 369 850 392",
  "M892 343 935 368M895 368 918 358",
  "M968 354 948 322 923 332C915 337 915 347 923 348L957 342",
  "M957 318 992 344M998 340 1033 328 1012 298 979 310M993 323 1022 313",
  "M1080 311 1059 280 1033 290C1026 294 1026 305 1035 305L1068 297",
  "M1126 293 1105 262 1080 271C1072 276 1073 288 1082 287L1115 278",
  "M1152 252 1127 272 1164 270",
  "M1050 246 1030 217 1010 225C1002 231 1002 245 1010 250 1015 254 1020 254 1024 253Z",
  "M869 280C880 268 898 272 899 284 899 296 878 298 871 291 866 285 873 310 895 304 905 300 906 296 906 291",
  "M912 278C915 270 930 266 940 268 948 272 948 285 940 291 930 294 915 294 912 285 912 276 925 272 937 274",
  "M946 253C950 246 966 245 970 250 972 258 958 262 950 260 946 258 945 255 946 253Z",
  "M956 268C960 260 980 258 984 265 985 273 968 278 960 275 956 273 955 270 956 268Z",
];

export default function App() {
  return (
    <div className="relative w-[1300px] h-[656px] overflow-hidden flex flex-col bg-[#d9d9d9] font-['Noto_Sans_CJK_SC','Noto_Sans',sans-serif] text-[12px] text-[#111]">
      <div className="h-[5px] bg-[#0c0c0c] shrink-0" />
      {/* menu */}
      <div className="h-[23px] shrink-0 flex items-center gap-[14px] bg-[#e9e9e9] whitespace-nowrap -ml-[2px]">
        {menus.map(([m, w], i) => (
          <span key={i} className={`${w} ${i === 12 ? "ml-[1px]" : ""} leading-none`}>
            {m}
          </span>
        ))}
      </div>

      {/* toolbars */}
      <div className="h-[34px] shrink-0 flex border-t border-t-[#c4c4c4]">
        <Bar className="w-[1124px] border-b border-b-[#bdbdbd]">
          <div className="w-[38.5px] shrink-0 pl-[2px] flex items-center gap-[2px] whitespace-nowrap">
            开始
            <div className="w-0 h-0 border-x-[3px] border-x-transparent border-t-[4px] border-t-black" />
          </div>
          <Icons list={row1a} />
          <Sep />
          <Icons list={row1b} />
          <Sep />
          <Cell>{undo}</Cell>
          <Sep />
          <Cell>{binoc}</Cell>
          <div className="w-[65px] shrink-0 text-[12px] whitespace-nowrap pl-[1px]">命令查找器</div>
          <Cell>{seq}</Cell>
          <Drop />
          <Sep />
          <Cell>{diam}</Cell>
          <Sep />
          <Cell>{infoD}</Cell>
          <Drop />
          <Grip />
          <Icons list={row1c} />
          <Drop />
          <Grip />
          <Icons list={row1d} />
          <Drop />
          <Grip />
          <Icons list={row1e} />
          <Drop />
        </Bar>
      </div>
      <div className="h-[35px] shrink-0 flex pl-[3px] border-t border-t-[#f0f0f0]">
        <Bar className="w-[717px] border-b border-b-[#bdbdbd]">
          <Icons list={row2a} />
          <Drop />
          <Grip />
          <Icons list={row2b} />
          <Cell>
            <Cancel />
          </Cell>
          <Icons list={row2c} />
          <Cell>{cyl}</Cell>
          <Drop />
        </Bar>
      </div>
      <div className="h-[34px] shrink-0 flex pl-[3px] border-t border-t-[#f0f0f0]">
        <Bar className="w-[1259px] border-b-2 border-b-[#b0b0b0]">
          <Icons list={row3a} />
          <Sep />
          <Icons list={row3b} />
          <Sep />
          <Icons list={row3c} />
          <Sep />
          <Icons list={row3d} />
          <Drop />
          <Grip />
          <Cell>{infoTile}</Cell>
          <Sep />
          <Icons list={row3e} />
          <Sep />
          <Icons list={row3f} />
          <Sep />
          <Cell>{gear}</Cell>
          <Drop />
          <Grip />
          <Icons list={mach3} />
          <Sep />
          <Cell>{flag}</Cell>
          <Sep />
          <Cell>{wiz}</Cell>
          <Cell>{docT}</Cell>
          <Sep />
          <Icons list={last4} />
          <Drop />
        </Bar>
      </div>
      {/* filter row */}
      <div className="h-[34px] shrink-0 flex items-center bg-[#dadada] border-b border-b-[#f2f2f2]">
        <div className="w-[87px] -ml-[8px] mr-[9px] h-[18px] shrink-0 rounded-[3px] border border-[#555] bg-white flex items-center justify-between pl-[3px] overflow-hidden">
          <span className="whitespace-nowrap">选择过滤器</span>
          <div className="w-[16px] h-full bg-gradient-to-b from-[#e4f1ff] to-[#6daef0] flex items-center justify-center shrink-0">
            <div className="w-0 h-0 border-x-[5px] border-x-transparent border-t-[6px] border-t-black" />
          </div>
        </div>
        <div className="w-[115px] h-[18px] shrink-0 rounded-[3px] border border-[#555] bg-white flex items-center justify-between pl-[1px] overflow-hidden">
          <span className="whitespace-nowrap">整个装配</span>
          <div className="w-[16px] h-full bg-gradient-to-b from-[#e4f1ff] to-[#6daef0] flex items-center justify-center shrink-0">
            <div className="w-0 h-0 border-x-[5px] border-x-transparent border-t-[6px] border-t-black" />
          </div>
        </div>
        <div className="w-[4px] shrink-0" />
        <Cell>{grayLink}</Cell>
        <Sep />
        <Cell>{grayBack}</Cell>
        <Cell>{redBox}</Cell>
        <div className="-ml-[3px] mr-[3px] h-full">
          <Drop />
        </div>
        <Cell>{undoCross}</Cell>
        <Cell>{findTree}</Cell>
        <Sep />
        <div className="-ml-[2px]">
          <Cell>{dashRect}</Cell>
        </div>
        <Drop />
        <Sep />
        <div className="-ml-[1px] flex">
          <Cell>{tape}</Cell>
          <Cell>{box3d}</Cell>
        </div>
      </div>
      {/* status row */}
      <div className="h-[22px] shrink-0 flex items-center bg-[#e6e6e6] border-b-2 border-b-[#8a8a8a]">
        <div className="w-[611px] shrink-0" />
        <span className="font-bold w-[641px] shrink-0">体 (35)</span>
        <div className="w-[20px] h-full border-x border-x-[#c8c8c8] shrink-0" />
      </div>

      {/* main */}
      <div className="flex flex-1 min-h-0">
        <div className="w-[627px] shrink-0 bg-[#e9e9e9] border-r-2 border-r-[#777] flex flex-col">
          <div className="h-[31px] shrink-0 flex items-center pl-[13px] font-bold text-[13px] whitespace-pre">
            <svg width="11" height="11" viewBox="0 0 11 11" className="mr-[12px]">
              <path d="M1 10 3 6l3-5 4 2-2 5z" fill="#e8e060" stroke="#222" />
            </svg>
            {"工序导航器  -  程序顺序"}
          </div>
          <div className="ml-[6px] w-[611px] h-[428px] shrink-0 border border-[#808080] bg-white flex flex-col overflow-hidden">
            <div className="h-[17px] shrink-0 flex border-b border-b-[#999] bg-gradient-to-b from-[#f6f6f6] to-[#dcdcdc] overflow-hidden">
              <div className={`${GRID} shrink-0`}>
                {heads.map(([h, p], i) => (
                  <div key={i} className={`border-r-2 border-r-[#c4c4c4] flex items-center whitespace-nowrap overflow-hidden ${p}`}>
                    {h}
                  </div>
                ))}
              </div>
              <div className="w-[7px] shrink-0" />
              <div className="border-l-2 border-l-[#c4c4c4] pl-[6px] leading-[16px] whitespace-nowrap">序</div>
            </div>
            <div className="flex flex-1 min-h-0">
              <div className="w-[591px] shrink-0 font-['Liberation_Mono',monospace] text-[11px] tracking-[-0.6px] flex flex-col">
                {rows.map((r, i) => (
                  <TreeRow key={i} r={r} i={i} />
                ))}
                <div className={`${GRID} flex-1`}>
                  <div className="border-r border-r-black" />
                  {[0, 1, 2, 3, 4, 5].map((n) => (
                    <div key={n} className="border-r-2 border-r-[#e6e6e6]" />
                  ))}
                </div>
              </div>
              <div className="flex-1 bg-[#efefef] flex flex-col items-center justify-between pt-[7px] pb-[6px] relative">
                <div className="w-0 h-0 border-x-[4px] border-x-transparent border-b-[4px] border-b-[#555]" />
                <div className="absolute left-[1px] top-[318px] w-[15px] h-[55px] rounded-[2px] border border-[#aaa] bg-gradient-to-r from-[#f0f0f0] to-[#c4c4c4] flex flex-col gap-[2px] items-center justify-center">
                  <div className="w-[7px] h-px bg-[#555]" />
                  <div className="w-[7px] h-px bg-[#555]" />
                  <div className="w-[7px] h-px bg-[#555]" />
                </div>
                <div className="w-0 h-0 border-x-[4px] border-x-transparent border-t-[4px] border-t-[#555]" />
              </div>
            </div>
            <div className="h-[17px] shrink-0 relative bg-[#efefef] flex items-center justify-between pl-[8px] pr-[29px]">
              <div className="w-0 h-0 border-y-[4px] border-y-transparent border-r-[4px] border-r-[#555]" />
              <div className="absolute left-[19px] top-0 w-[364px] h-[15px] rounded-[2px] border border-[#999] bg-gradient-to-b from-[#ececec] to-[#c0c0c0] flex items-center justify-center gap-[2px]">
                <div className="w-px h-[7px] bg-[#555]" />
                <div className="w-px h-[7px] bg-[#555]" />
                <div className="w-px h-[7px] bg-[#555]" />
              </div>
              <div className="w-0 h-0 border-y-[4px] border-y-transparent border-l-[4px] border-l-[#555]" />
            </div>
          </div>
          <div className="flex items-start gap-[5px] pl-[6px] mt-[4px]">
            <div className="w-[243px] h-px bg-[#aaa] mt-[1px]" />
            <div className="w-[114px] h-[8px] bg-[#cfcfcf] border border-[#aaa]" />
            <div className="w-[243px] h-px bg-[#aaa] mt-[1px]" />
          </div>
        </div>

        {/* CAD view */}
        <div className="relative flex-1 bg-[#005500] overflow-hidden">
          <svg width="673" height="469" viewBox="627 187 673 469" fill="none" className="block">
            <rect x="627" y="187" width="673" height="469" fill="#005500" />
            <path d="M627 187H997L627 331Z" fill="#00cc00" />
            <path d="M627 353 1055 187H1145L1207 277 627 499Z" fill="#00cc00" />
            <path d="M1147 187H1182L1152 195Z" fill="#00cc00" />
            <path d="M997 187 627 331M1055 187 627 353M1145 187 1207 277 627 499" stroke="#3f5f4f" />
            <path d="M1152 195 1182 189 1185 227" stroke="#3f5f4f" />
            <path d="M1185 227 1220 230 1300 208V265L1275 228 1228 241 1185 237Z" fill="#00cc00" stroke="#3f5f4f" />
            <path d="M1220 230 1228 241" stroke="#3f5f4f" />
            <path d="M1273 242 1300 278V335L1285 337 1275 323 1253 328 1245 308Z" fill="#006a00" />
            <path d="M1275 228 1245 308 1228 318" stroke="#3f5f4f" />
            <path d="M1208 293 1213 383 1223 633C1235 640 1245 648 1252 656H1300V590L1265 540 1229 488 1300 440V334L1285 337 1275 324 1237 332 1228 318Z" fill="#00cc00" stroke="#3f5f4f" />
            <path d="M1213 383 1300 363" stroke="#3f5f4f" />
            <path d="M1228 318 1233 316 1242 331 1237 332ZM1236 315 1245 310 1252 327 1245 330Z" fill="#1a8a1a" />
            {paths.map(([x, t, b, c], i) => (
              <g key={i}>
                <path d={`M${x - (t - 187) * 0.022} 187 ${x} ${t}`} stroke={i % 2 ? "#1e88e0" : "#0a18e8"} strokeWidth="1.3" strokeDasharray="8 9" />
                <path d={`M${x} ${t} ${x} ${b}`} stroke={c} strokeWidth="1.5" />
              </g>
            ))}
            {letters.map((d, i) => (
              <path key={i} d={d} stroke="#2d5a44" strokeWidth="2" transform="translate(-1 1.5)" />
            ))}
            {letters.map((d, i) => (
              <path key={i} d={d} stroke="#12f2ff" strokeWidth="2" />
            ))}
            <path d="M804 386 841 414" stroke="#12f2ff" strokeWidth="1.5" />
            <path d="M792 507 814 425 809 423 825 407 829 431 822 428Z" fill="#ff3d3d" />
            <path d="M963 477C952 495 945 505 942 517 938 530 936 545 932 557 925 577 918 596 911 613 905 625 900 632 899 640L895 648" stroke="#ff3d3d" strokeWidth="5" strokeLinecap="round" />
            <path d="M906 529C912 530 918 537 932 558 942 575 948 585 950 593 955 603 958 612 959 622" stroke="#ff3d3d" strokeWidth="5" strokeLinecap="round" />
            <path d="M651 640 656 646M656 640 651 646" stroke="#e04040" />
            <path d="M655 645 665 656" stroke="#e86060" strokeWidth="2" />
            <path d="M665 653 679 650 684 656H665Z" fill="#b8b8b8" />
            <path d="M699 655 703 653" stroke="#5a8a5a" />
            {/* watermark mark */}
            <path d="M1053 562 1088 582V622L1053 643 1018 622V582Z" fill="#148a80" />
            <path d="M1053 562 1018 582V622L1030 629 1040 595 1072 573Z" fill="#5aa88e" />
            <path d="M1033 572C1050 575 1068 580 1072 605M1018 590C1030 600 1034 605 1030 630M1032 629C1045 625 1060 625 1088 612M1053 642C1048 630 1072 630 1073 590" stroke="#005500" strokeWidth="0.8" />
            <path d="M1053 587 1073 598V616L1053 628 1035 616V598Z" fill="#005500" />
            <path d="M1053 591 1069 598 1053 607 1037 598Z" fill="#52a088" />
            <path d="M1037 598 1053 607V622L1037 613Z" fill="#2e9080" />
            <path d="M1069 598 1053 607V622L1069 613Z" fill="#0f8078" />
          </svg>
          <div className="absolute left-[470px] top-[384px] text-white/50 font-bold text-[39px] leading-[44px] whitespace-nowrap font-['Liberation_Sans','Noto_Sans_CJK_SC',sans-serif] tracking-[2px]">
            3D世界网
          </div>
          <div className="absolute left-[469px] top-[430px] text-white/40 font-bold text-[13px] leading-[16px] whitespace-nowrap font-['Liberation_Sans',sans-serif] tracking-[4.6px]">
            WWW.3DSJW.COM
          </div>
        </div>
      </div>

      {/* upload widget */}
      <div className="absolute left-[1119px] top-[12px] w-[104px] h-[24px] rounded-[4px] border border-[#3aa4f5] flex overflow-hidden">
        <div className="w-[29px] bg-[#2f9cf5] flex items-center justify-center">
          <svg width="19" height="16" viewBox="0 0 19 16" fill="none">
            <circle cx="9.5" cy="5" r="3.5" stroke="#fff" strokeWidth="2.4" />
            <circle cx="5" cy="11" r="3.5" stroke="#fff" strokeWidth="2.4" />
            <circle cx="14" cy="11" r="3.5" stroke="#fff" strokeWidth="2.4" />
          </svg>
        </div>
        <div className="flex-1 bg-gradient-to-b from-[#d8f2ff] to-[#bfe8ff] text-[#4fa8ee] flex items-center justify-center">拖拽上传</div>
      </div>
      {/* window buttons */}
      <div className="absolute left-[1271px] top-[10px] flex gap-[3px]">
        <div className="w-[15px] h-[20px] rounded-[3px] border border-[#666] bg-[#f2f2f2] flex items-end justify-center pb-[3px]">
          <div className="w-[7px] h-[2px] bg-[#555]" />
        </div>
        <div className="w-[15px] h-[20px] rounded-[3px] border border-[#666] bg-[#f2f2f2] flex items-center justify-center">
          <div className="w-[9px] h-[8px] border border-[#555]" />
        </div>
      </div>
      <div className="absolute left-[1267px] top-0 flex gap-[3px]">
        <div className="w-[18px] h-[3px] bg-[#9a9a9a]" />
        <div className="w-[18px] h-[3px] bg-[#9a9a9a]" />
      </div>
    </div>
  );
}
